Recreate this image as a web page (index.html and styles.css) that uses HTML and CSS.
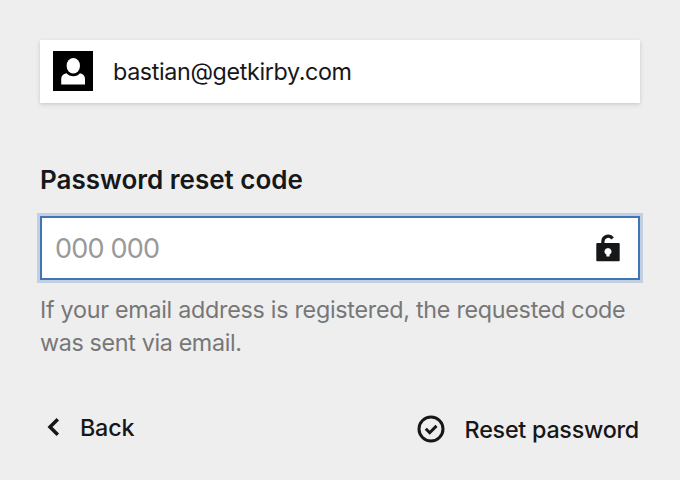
FILE: index.html
```
<!DOCTYPE html>
<html lang="en">
<head>
<meta charset="utf-8">
<title>Password reset</title>
<link rel="stylesheet" href="styles.css">
</head>
<body>
<main class="login">
  <div class="user">
    <span class="avatar"><svg viewBox="0 0 40 40"><path d="M8.200 33.500V28q0-4.500 5.300-5.700Q16 25.300 20.300 25.300T27 22.300Q32 23.500 32 28v5.500z"/><ellipse cx="20.300" cy="14.800" rx="6.700" ry="7.700"/></svg></span>
    <span class="email">bastian@getkirby.com</span>
  </div>
  <label class="label" for="code">Password reset code</label>
  <div class="field">
    <span class="placeholder" id="code">000 000</span>
    <svg class="lock" viewBox="0 0 24 28"><path class="shackle" d="M6.900 10V7.200A5.300 5.300 0 0 1 16.600 4.500"/><path fill-rule="evenodd" d="M1.300 9H22.700a1 1 0 0 1 1 1V26.300a1 1 0 0 1-1 1H1.300a1 1 0 0 1-1-1V10a1 1 0 0 1 1-1zM12 13.900a3.500 3.500 0 0 0-1.600 6.600V22.600h3.200V20.500A3.500 3.500 0 0 0 12 13.900z"/></svg>
  </div>
  <p class="help"><span class="line one">If your email address is registered, the requested code</span><span class="line two">was sent via email.</span></p>
  <footer class="actions">
    <div class="action back"><svg viewBox="0 0 28 28"><path d="M17.800 6.200L10 14l7.800 7.800"/></svg><span>Back</span></div>
    <div class="action reset"><svg viewBox="0 0 28 28"><circle cx="14" cy="14" r="12"/><path d="M8.800 13.800l3.900 3.900 6.800-6.800"/></svg><span>Reset password</span></div>
  </footer>
</main>
</body>
</html>
```
FILE: styles.css
```
* { box-sizing: border-box; }
body { margin: 0; background: #eee; color: #161719; font-family: Inter, sans-serif; font-size: 23.3px; }
.login { width: 600px; margin: 40px auto 0; }
.user { display: flex; align-items: center; height: 63px; padding: 0 0 1px 13px; background: #fff; box-shadow: 0 2px 6px #00000012, 0 1px 3px #00000018; }
.avatar { width: 40px; height: 40px; background: #000; margin-right: 20px; }
.avatar svg { display: block; fill: #fff; }
.email { letter-spacing: -.36px; }
.label { display: block; margin-top: 60px; height: 34px; line-height: 34px; font-size: 26px; font-weight: 600; }
.field { display: flex; align-items: center; justify-content: space-between; height: 64px; margin-top: 19px; padding: 0 18px 0 13px; border: 2px solid #4175b6; background: #fff; box-shadow: 0 0 0 3px #4175b640; }
.placeholder { color: #999; font-size: 27px; letter-spacing: -.8px; }
.lock { width: 24px; height: 28px; fill: #161719; }
.shackle { fill: none; stroke: #161719; stroke-width: 3.2; }
.help { margin: 13px 0 0; color: #777; line-height: 33px; }
.line { display: block; white-space: nowrap; letter-spacing: -.27px; }
.two { letter-spacing: -.35px; }
.actions { display: flex; justify-content: space-between; margin-top: 51px; font-weight: 500; letter-spacing: -.2px; }
.action { display: flex; align-items: center; height: 34px; }
.action svg { width: 28px; height: 28px; fill: none; stroke: currentColor; stroke-width: 3; }
.back svg { margin-right: 12px; stroke-width: 3.5; }
.reset { margin-top: 2px; padding-right: 1px; letter-spacing: -.24px; }
.reset svg { margin-right: 19.5px; }
```
